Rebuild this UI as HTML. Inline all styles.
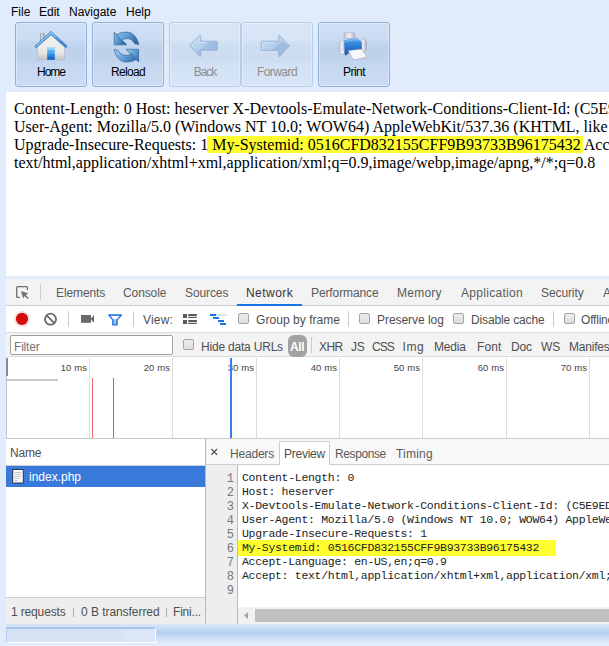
<!DOCTYPE html>
<html><head><meta charset="utf-8">
<style>
*{margin:0;padding:0;box-sizing:border-box}
html,body{width:609px;height:646px;overflow:hidden;background:#e0ecfb;font-family:"Liberation Sans",sans-serif;position:relative}
.a{position:absolute;white-space:nowrap;line-height:14px}
.r{position:absolute}
.menu{font-size:12px;color:#000;top:5px}
.btn{position:absolute;top:22px;height:65px;border:1px solid #8fb0db;border-radius:3px;box-shadow:inset 0 0 0 1px rgba(255,255,255,0.35);background:linear-gradient(#cfe0f5 0%,#cadcf3 28%,#c4d7f0 29%,#bed2ec 40%,#bfd3ed 58%,#c5d8f0 68%,#cadcf3 100%)}
.btn.dis{border-color:#b8cce8;background:linear-gradient(#d9e6f7 0%,#d6e4f6 28%,#d2e1f4 29%,#ccdcf1 40%,#cddcf1 58%,#d2e1f4 68%,#d6e4f6 100%)}
.btn .lb{position:absolute;left:0;right:0;top:41.5px;text-align:center;font-size:12px;line-height:14px;color:#000}
.btn.dis .lb{color:#8d8d8d}
.ln{position:absolute;left:14px;font-family:"Liberation Serif",serif;font-size:16px;line-height:18px;color:#000;white-space:nowrap}
.t{position:absolute;white-space:nowrap;font-size:12px;line-height:14px;color:#4e4e4e;letter-spacing:-0.2px}
.tab{color:#5a5a5a;letter-spacing:-0.1px}
.sep{position:absolute;width:1px;background:#ccc}
.cb{position:absolute;width:11px;height:11px;border:1px solid #a3a3a3;border-radius:2px;background:linear-gradient(#ececec,#dedede)}
.gl{position:absolute;top:358px;width:1px;height:80px;background:#dedede}
.ms{position:absolute;top:362px;font-size:9.5px;line-height:12px;color:#444;text-align:right;width:40px;word-spacing:0.5px}
.code{position:absolute;left:242px;font-family:"Liberation Mono",monospace;font-size:11.5px;line-height:14px;color:#222;white-space:pre;letter-spacing:-0.3px}
.num{position:absolute;left:206px;width:28px;text-align:right;font-family:"Liberation Mono",monospace;font-size:12px;line-height:14px;color:#787878}
</style></head><body>
<!-- menu -->
<div class="a menu" style="left:11px">File</div>
<div class="a menu" style="left:39px">Edit</div>
<div class="a menu" style="left:69px">Navigate</div>
<div class="a menu" style="left:126px">Help</div>

<!-- toolbar -->
<div class="btn" style="left:15px;width:72px"><div class="lb" style="letter-spacing:-1px">Home</div></div>
<div class="btn" style="left:92px;width:72px"><div class="lb" style="letter-spacing:-0.7px">Reload</div></div>
<div class="btn dis" style="left:169px;width:72px"><div class="lb" style="letter-spacing:-1.1px">Back</div></div>
<div class="btn dis" style="left:241px;width:72px"><div class="lb" style="letter-spacing:-0.55px">Forward</div></div>
<div class="btn" style="left:318px;width:72px"><div class="lb" style="letter-spacing:-0.5px">Print</div></div>



<!-- page content -->
<div class="r" style="left:6px;top:92px;width:603px;height:184px;background:#fff"></div>
<div class="ln" style="top:100px">Content-Length: 0 Host: heserver X-Devtools-Emulate-Network-Conditions-Client-Id: (C5E9ED0B3A0F)</div>
<div class="ln" style="top:118px">User-Agent: Mozilla/5.0 (Windows NT 10.0; WOW64) AppleWebKit/537.36 (KHTML, like Gecko)</div>
<div class="r" style="left:207px;top:136px;width:376px;height:17px;background:#ffff30"></div>
<div class="ln" style="top:136px">Upgrade-Insecure-Requests: 1 My-Systemid: 0516CFD832155CFF9B93733B96175432 Accept-Language: en-US</div>
<div class="ln" style="top:154px">text/html,application/xhtml+xml,application/xml;q=0.9,image/webp,image/apng,*/*;q=0.8</div>

<!-- DEVTOOLS -->
<!-- tab bar -->
<div class="r" style="left:6px;top:279px;width:603px;height:26px;background:#f3f3f3"></div>
<div class="r" style="left:6px;top:305px;width:603px;height:1px;background:#cdcdcd"></div>
<div class="sep" style="left:40px;top:284px;height:16px"></div>
<div class="t tab" style="left:56px;top:286px">Elements</div>
<div class="t tab" style="left:123px;top:286px">Console</div>
<div class="t tab" style="left:185px;top:286px">Sources</div>
<div class="t tab" style="left:246px;top:286px;color:#333;letter-spacing:0.45px">Network</div>
<div class="r" style="left:237px;top:304px;width:65px;height:2px;background:#1a73e8"></div>
<div class="t tab" style="left:311px;top:286px">Performance</div>
<div class="t tab" style="left:397px;top:286px;letter-spacing:0.25px">Memory</div>
<div class="t tab" style="left:461px;top:286px;letter-spacing:0.3px">Application</div>
<div class="t tab" style="left:541px;top:286px">Security</div>
<div class="t tab" style="left:603px;top:286px">A</div>

<!-- row 2 -->
<div class="r" style="left:6px;top:306px;width:603px;height:26px;background:#fff"></div>
<div class="r" style="left:6px;top:332px;width:603px;height:1px;background:#dcdcdc"></div>
<div class="sep" style="left:68px;top:311px;height:16px"></div>
<div class="sep" style="left:133px;top:311px;height:16px"></div>
<div class="t" style="left:143px;top:313px;letter-spacing:0.2px">View:</div>
<div class="cb" style="left:238px;top:313px"></div>
<div class="t" style="left:256px;top:313px;letter-spacing:0.05px">Group by frame</div>
<div class="sep" style="left:348px;top:311px;height:16px"></div>
<div class="cb" style="left:359px;top:313px"></div>
<div class="t" style="left:377px;top:313px;letter-spacing:-0.05px">Preserve log</div>
<div class="cb" style="left:453px;top:313px"></div>
<div class="t" style="left:471px;top:313px;letter-spacing:-0.15px">Disable cache</div>
<div class="sep" style="left:553px;top:311px;height:16px"></div>
<div class="cb" style="left:564px;top:313px"></div>
<div class="t" style="left:581px;top:313px">Offline</div>

<!-- row 3 -->
<div class="r" style="left:6px;top:333px;width:603px;height:24px;background:#f3f3f3"></div>
<div class="r" style="left:6px;top:356px;width:603px;height:1px;background:#dcdcdc"></div>
<div class="r" style="left:10px;top:335px;width:163px;height:20px;border:1px solid #a0a0a0;border-radius:2px;background:#fff"></div>
<div class="t" style="left:14px;top:340px;color:#757575">Filter</div>
<div class="cb" style="left:183px;top:339px"></div>
<div class="t" style="left:201px;top:340px;letter-spacing:-0.2px">Hide data URLs</div>
<div class="r" style="left:288px;top:335px;width:19px;height:22px;border-radius:6px;background:#a2a2a2"></div>
<div class="t" style="left:290px;top:340px;color:#fff;letter-spacing:-0.4px;font-weight:bold">All</div>
<div class="sep" style="left:311px;top:337px;height:16px"></div>
<div class="t" style="left:319px;top:340px;letter-spacing:-0.6px">XHR</div>
<div class="t" style="left:351px;top:340px">JS</div>
<div class="t" style="left:372px;top:340px;letter-spacing:-1px">CSS</div>
<div class="t" style="left:402.5px;top:340px;letter-spacing:0.6px">Img</div>
<div class="t" style="left:434px;top:340px">Media</div>
<div class="t" style="left:477px;top:340px;letter-spacing:0.1px">Font</div>
<div class="t" style="left:511px;top:340px">Doc</div>
<div class="t" style="left:541px;top:340px">WS</div>
<div class="t" style="left:569px;top:340px">Manifest</div>

<!-- overview -->
<div class="r" style="left:6px;top:357px;width:603px;height:81px;background:#fff"></div>
<div class="r" style="left:6px;top:438px;width:603px;height:1px;background:#cacaca"></div>
<div class="r" style="left:6px;top:358px;width:1px;height:80px;background:#c4c4c4"></div>
<div class="r" style="left:6px;top:358px;width:2px;height:18px;background:#8a8a8a"></div>
<div class="r" style="left:7px;top:379px;width:51px;height:2px;background:#c8c8c8"></div>
<div class="gl" style="left:89px"></div>
<div class="gl" style="left:172px"></div>
<div class="gl" style="left:256px"></div>
<div class="gl" style="left:339px"></div>
<div class="gl" style="left:422px"></div>
<div class="gl" style="left:506px"></div>
<div class="gl" style="left:589px"></div>
<div class="ms" style="left:47px">10 ms</div>
<div class="ms" style="left:130px">20 ms</div>
<div class="ms" style="left:214px">30 ms</div>
<div class="ms" style="left:297px">40 ms</div>
<div class="ms" style="left:380px">50 ms</div>
<div class="ms" style="left:464px">60 ms</div>
<div class="ms" style="left:547px">70 ms</div>
<div class="r" style="left:92px;top:378px;width:1px;height:60px;background:#f07070"></div>
<div class="r" style="left:113px;top:378px;width:1px;height:60px;background:#7070e8"></div>
<div class="r" style="left:230px;top:358px;width:2px;height:80px;background:#3b7be8"></div>

<!-- name panel -->
<div class="r" style="left:6px;top:439px;width:199px;height:26px;background:#fff"></div>
<div class="r" style="left:6px;top:465px;width:199px;height:1px;background:#cdcdcd"></div>
<div class="t" style="left:10px;top:446px">Name</div>
<div class="r" style="left:6px;top:466px;width:199px;height:21px;background:#3879d9"></div>
<div class="t" style="left:29px;top:470px;color:#fff;letter-spacing:0px">index.php</div>
<div class="r" style="left:6px;top:487px;width:199px;height:110px;background:#fff"></div>
<div class="r" style="left:6px;top:597px;width:199px;height:1px;background:#cdcdcd"></div>
<div class="r" style="left:6px;top:598px;width:199px;height:26px;background:#eeeeee"></div>
<div class="t" style="left:11px;top:605px;letter-spacing:-0.15px">1 requests</div>
<div class="r" style="left:73px;top:608px;width:1px;height:9px;background:#b0b0b0"></div>
<div class="t" style="left:81px;top:605px;letter-spacing:-0.05px">0 B transferred</div>
<div class="r" style="left:166px;top:608px;width:1px;height:9px;background:#b0b0b0"></div>
<div class="t" style="left:173px;top:605px">Fini...</div>
<div class="r" style="left:205px;top:439px;width:1px;height:185px;background:#b8b8b8"></div>

<!-- preview panel -->
<div class="r" style="left:206px;top:439px;width:403px;height:26px;background:#f8f8f8"></div>
<div class="r" style="left:206px;top:464px;width:403px;height:1px;background:#cdcdcd"></div>
<div class="r" style="left:279px;top:441px;width:51px;height:24px;background:#fff;border:1px solid #cdcdcd;border-bottom:none"></div>
<div class="t" style="left:230px;top:447px;letter-spacing:-0.2px;color:#5a5a5a">Headers</div>
<div class="t" style="left:284px;top:447px;letter-spacing:-0.25px">Preview</div>
<div class="t" style="left:335px;top:447px;letter-spacing:-0.4px;color:#5a5a5a">Response</div>
<div class="t" style="left:396px;top:447px;letter-spacing:0.2px;color:#5a5a5a">Timing</div>
<div class="r" style="left:206px;top:465px;width:403px;height:142px;background:#fff"></div>
<div class="r" style="left:206px;top:465px;width:31px;height:159px;background:#eeeeee"></div>
<div class="r" style="left:237px;top:465px;width:1px;height:159px;background:#bbbbbb"></div>
<div class="r" style="left:238px;top:540px;width:318px;height:16px;background:#ffff30"></div>
<div class="num" style="top:472px">1</div><div class="code" style="top:471px">Content-Length: 0</div>
<div class="num" style="top:486px">2</div><div class="code" style="top:485px">Host: heserver</div>
<div class="num" style="top:500px">3</div><div class="code" style="top:499px">X-Devtools-Emulate-Network-Conditions-Client-Id: (C5E9ED0B)</div>
<div class="num" style="top:514px">4</div><div class="code" style="top:513px">User-Agent: Mozilla/5.0 (Windows NT 10.0; WOW64) AppleWebKit</div>
<div class="num" style="top:528px">5</div><div class="code" style="top:527px">Upgrade-Insecure-Requests: 1</div>
<div class="num" style="top:542px">6</div><div class="code" style="top:541px">My-Systemid: 0516CFD832155CFF9B93733B96175432</div>
<div class="num" style="top:556px">7</div><div class="code" style="top:555px">Accept-Language: en-US,en;q=0.9</div>
<div class="num" style="top:570px">8</div><div class="code" style="top:569px">Accept: text/html,application/xhtml+xml,application/xml;q=0.9</div>
<div class="num" style="top:584px">9</div>
<!-- h scrollbar -->
<div class="r" style="left:238px;top:607px;width:371px;height:17px;background:#f1f1f1"></div>
<div class="r" style="left:255px;top:609px;width:354px;height:13px;background:#c1c1c1"></div>

<!-- bottom -->
<div class="r" style="left:0;top:624px;width:609px;height:22px;background:linear-gradient(#d6e6f9 0px,#cfe1f7 3px,#bed6f3 6px,#b6d0f1 9px,#c3d9f4 12px,#d4e5f8 16px,#e2ecf9 19px)"></div>
<div class="r" style="left:0;top:624px;width:6px;height:22px;background:#e0ecfb"></div>
<div class="r" style="left:6px;top:627px;width:150px;height:16px;background:#d5e3f4;border-top:2px solid #a9c5ea;border-left:1px solid #b4cdee;border-right:1px solid #fff;border-bottom:1px solid #fff"></div>
<div class="r" style="left:125px;top:629px;width:30px;height:13px;background:#dbe6f6"></div>
<svg class="r" style="left:30px;top:26px" width="42" height="38" viewBox="30 26 42 38">
 <defs>
  <linearGradient id="hb" x1="0" y1="0" x2="0" y2="1"><stop offset="0" stop-color="#f2f2f2"/><stop offset="0.7" stop-color="#e8e8e8"/><stop offset="1" stop-color="#c4c4c4"/></linearGradient>
  <linearGradient id="hd" x1="0" y1="0" x2="0" y2="1"><stop offset="0" stop-color="#8ed4f6"/><stop offset="0.2" stop-color="#8ed4f6"/><stop offset="0.21" stop-color="#5ab3ec"/><stop offset="0.5" stop-color="#4aa0e6"/><stop offset="0.51" stop-color="#3a8fe0"/><stop offset="0.8" stop-color="#2a7ad4"/><stop offset="0.81" stop-color="#1a66c4"/><stop offset="1" stop-color="#1a66c4"/></linearGradient>
  <linearGradient id="hr" x1="0" y1="0" x2="1" y2="0.3"><stop offset="0" stop-color="#4aa6ea"/><stop offset="0.5" stop-color="#6cc0f2"/><stop offset="1" stop-color="#3a8ad8"/></linearGradient>
 </defs>
 <rect x="40.2" y="33.2" width="4.4" height="9" fill="#9c9c9c"/>
 <rect x="41" y="33.6" width="2.2" height="8.5" fill="#d4d4d4"/>
 <path d="M37.6 46.8 L51 35 L64.5 46.8 L64.5 59.8 L37.6 59.8 Z" fill="url(#hb)" stroke="#b4b4c4" stroke-width="0.6"/>
 <rect x="47.2" y="47.4" width="7.6" height="12.4" fill="url(#hd)"/>
 <path d="M35.5 45.6 L51 31.4 L66.5 45.6 Q67.3 46.6 66.3 47.3 L65.6 47.5 L51 34.6 L36.4 47.5 L35.7 47.3 Q34.7 46.6 35.5 45.6 Z" fill="url(#hr)" stroke="#2f70bd" stroke-width="0.8" stroke-linejoin="round"/>
 <path d="M37.2 45.2 L51 32.6 L56 37" fill="none" stroke="#a8e0f8" stroke-width="0.9" stroke-linecap="round" opacity="0.8"/>
</svg>
<svg class="r" style="left:108px;top:28px" width="38" height="38" viewBox="0 0 38 38">
 <defs>
  <linearGradient id="rl" x1="0" y1="0" x2="1" y2="0.6"><stop offset="0" stop-color="#8fc2e6"/><stop offset="0.45" stop-color="#5f9fd3"/><stop offset="1" stop-color="#2d69a8"/></linearGradient>
  <linearGradient id="rl2" x1="1" y1="0.6" x2="0" y2="0"><stop offset="0" stop-color="#8fc2e6"/><stop offset="0.5" stop-color="#5a9ad0"/><stop offset="1" stop-color="#2a64a6"/></linearGradient>
 </defs>
 <path d="M6.2 4.1 L6.2 16.8 L18.7 16.8 Z" fill="url(#rl)" stroke="#35689a" stroke-width="0.7" stroke-linejoin="round"/>
 <path d="M8.8 6.7 C12 4.5, 15.5 4.1, 18.7 4.1 C24.5 4.1, 29 9, 30.8 16.5 L26.8 15.8 C25 12.5, 22 10.6, 19.3 10.6 C17 10.6, 14.8 11.3, 13.1 12.5 Z" fill="url(#rl)" stroke="#35689a" stroke-width="0.7" stroke-linejoin="round"/>
 <g transform="rotate(180 18.4 19.05)">
 <path d="M6.2 4.1 L6.2 16.8 L18.7 16.8 Z" fill="url(#rl2)" stroke="#35689a" stroke-width="0.7" stroke-linejoin="round"/>
 <path d="M8.8 6.7 C12 4.5, 15.5 4.1, 18.7 4.1 C24.5 4.1, 29 9, 30.8 16.5 L26.8 15.8 C25 12.5, 22 10.6, 19.3 10.6 C17 10.6, 14.8 11.3, 13.1 12.5 Z" fill="url(#rl2)" stroke="#35689a" stroke-width="0.7" stroke-linejoin="round"/>
 </g>
</svg>
<svg class="r" style="left:185px;top:30px" width="40" height="30" viewBox="185 30 40 30">
 <defs>
  <linearGradient id="ab" x1="0" y1="0" x2="1" y2="1"><stop offset="0" stop-color="#c9def2"/><stop offset="0.5" stop-color="#b3cdea"/><stop offset="0.55" stop-color="#a0bde3"/><stop offset="1" stop-color="#9ab7e0"/></linearGradient>
 </defs>
 <path d="M189.6 45.8 L199.6 35.6 Q200.8 34.8 200.8 36.4 L200.8 41.2 L216.3 41.2 Q217.5 41.2 217.5 42.5 L217.5 49 Q217.5 50.2 216.3 50.2 L200.8 50.2 L200.8 55.4 Q200.8 57 199.6 56.1 Z" fill="url(#ab)" stroke="#9db4d9" stroke-width="1" stroke-linejoin="round"/>
 <path d="M191.5 45.6 L199.3 37.6 L199.3 42.6 L206 42.6" fill="none" stroke="#d6e6f6" stroke-width="0.9" opacity="0.8"/>
</svg>
<svg class="r" style="left:255px;top:30px" width="40" height="30" viewBox="255 30 40 30">
 <path d="M289.5 45.8 L279.6 35.6 Q278.6 34.8 278.6 36.4 L278.6 41.2 L262.4 41.2 Q261.2 41.2 261.2 42.5 L261.2 49.2 Q261.2 50.4 262.4 50.4 L278.6 50.4 L278.6 55.6 Q278.6 57.2 279.6 56.3 Z" fill="url(#ab)" stroke="#9db4d9" stroke-width="1" stroke-linejoin="round"/>
 <path d="M262.6 48.8 L262.6 42.6 L274 42.6 M280 37.6 L287 44.8" fill="none" stroke="#d6e6f6" stroke-width="0.9" opacity="0.8"/>
</svg>
<svg class="r" style="left:335px;top:28px" width="40" height="36" viewBox="335 28 40 36">
 <defs>
  <linearGradient id="pb" x1="0" y1="0" x2="0" y2="1"><stop offset="0" stop-color="#7ab8ee"/><stop offset="0.25" stop-color="#3d8ee0"/><stop offset="0.5" stop-color="#2a78d2"/><stop offset="1" stop-color="#1656b0"/></linearGradient>
  <linearGradient id="ps" x1="0" y1="0" x2="1" y2="0"><stop offset="0" stop-color="#c4c4d8"/><stop offset="0.4" stop-color="#f0f0f6"/><stop offset="1" stop-color="#a4a4c0"/></linearGradient>
  <linearGradient id="pt" x1="0" y1="0" x2="1" y2="0"><stop offset="0" stop-color="#c0c0d4"/><stop offset="0.5" stop-color="#f4f4fa"/><stop offset="1" stop-color="#b0b0c8"/></linearGradient>
 </defs>
 <path d="M344 38.5 L344 33.5 Q344 32.9 344.6 32.9 L354 32.9 Q354.7 32.9 354.7 33.5 L354.7 38.5 Z" fill="url(#pt)" stroke="#a6a6c0" stroke-width="0.6"/>
 <ellipse cx="342.4" cy="47.4" rx="3.5" ry="7.5" fill="url(#ps)" stroke="#9c9cbc" stroke-width="0.5"/>
 <ellipse cx="363.5" cy="45.1" rx="3.1" ry="7.2" fill="url(#ps)" stroke="#9c9cbc" stroke-width="0.5"/>
 <circle cx="343.3" cy="52.3" r="0.9" fill="#fff"/>
 <path d="M344.2 40.2 Q350 38.4 357.3 38 L361.8 42.3 L362 51.2 L348.6 53.2 L345.6 55.8 L344.6 54 Z" fill="url(#pb)"/>
 <path d="M345 41.6 Q351 40 357.6 39.6" stroke="#9fd0f6" stroke-width="0.8" fill="none" opacity="0.7"/>
 <path d="M348.1 50.7 L361.3 49 L367.5 56.9 L353.4 60.2 Z" fill="#f7f7fb" stroke="#9898b6" stroke-width="0.6"/>
</svg>
<!-- devtools icons -->
<svg class="r" style="left:0;top:278px" width="240" height="60" viewBox="0 278 240 60">
 <path d="M19.8 297.4 L17.6 297.4 Q16.7 297.4 16.7 296.5 L16.7 287.6 Q16.7 286.7 17.6 286.7 L26.5 286.7 Q27.4 286.7 27.4 287.6 L27.4 289.9" fill="none" stroke="#6e6e6e" stroke-width="1.3"/>
 <path d="M21 291 L28.4 293.6 L25.6 294.9 L28.7 298 L27.7 299 L24.6 295.9 L23.3 298.6 Z" fill="#6e6e6e"/>
 <circle cx="22" cy="318.9" r="7.4" fill="#fdeaea" stroke="#f2b4b4" stroke-width="0.9" stroke-dasharray="1.2 0.9"/>
 <circle cx="22" cy="318.9" r="6.1" fill="#d60d0d"/>
 <circle cx="50.5" cy="319.2" r="5.5" fill="none" stroke="#6a6a6a" stroke-width="1.8"/>
 <path d="M46.6 315.3 L54.4 323.1" stroke="#6a6a6a" stroke-width="1.8"/>
 <rect x="81" y="315" width="10" height="7.8" fill="#6b6b6b"/>
 <path d="M90.5 318.9 L94 315 L94 322.8 Z" fill="#6b6b6b"/>
 <path d="M108.9 315 L121.4 315 L117.1 319.8 L117.1 324.9 L112.8 324.9 L112.8 319.8 Z" fill="#a6bfe4" stroke="#1a73e8" stroke-width="1.35" stroke-linejoin="round"/>
 <path d="M110.6 316 L119.7 316 L116.6 319.3 L113.3 319.3 Z" fill="#fff"/>
 <g fill="#5a5a5a">
  <rect x="183" y="314" width="4" height="4"/><rect x="188.2" y="314" width="8.7" height="2.2"/><rect x="188.2" y="317" width="8.7" height="1"/>
  <rect x="183" y="320" width="4" height="4"/><rect x="188.2" y="320" width="8.7" height="2.2"/><rect x="188.2" y="323" width="8.7" height="1"/>
 </g>
 <rect x="216" y="314" width="11" height="2" fill="#d6e4fb"/>
 <g fill="#1a73e8">
  <rect x="210" y="314" width="6" height="2"/><rect x="213" y="317" width="6" height="2"/><rect x="218" y="320" width="6" height="2"/><rect x="220" y="323" width="6" height="2"/>
 </g>
</svg>
<svg class="r" style="left:10px;top:466px" width="16" height="20" viewBox="10 466 16 20">
 <path d="M12.7 469.5 L23.3 469.5 L23.3 483 L12.7 483 Z" fill="#fafafa" stroke="#26344c" stroke-width="1"/>
 <g fill="#c8c8c8"><rect x="14.5" y="472" width="7" height="1"/><rect x="14.5" y="474" width="7" height="1"/><rect x="14.5" y="476" width="7" height="1"/><rect x="14.5" y="478" width="5" height="1"/><rect x="14.5" y="480" width="3" height="1"/></g>
</svg>
<svg class="r" style="left:240px;top:607px" width="12" height="17" viewBox="240 607 12 17">
 <path d="M244 615.5 L248 612 L248 619 Z" fill="#a3a3a3"/>
</svg>
<svg class="r" style="left:208px;top:446px" width="12" height="12" viewBox="208 446 12 12">
 <path d="M211.3 449 L217.1 454.8 M217.1 449 L211.3 454.8" stroke="#555" stroke-width="1.25"/>
</svg>
</body></html>
